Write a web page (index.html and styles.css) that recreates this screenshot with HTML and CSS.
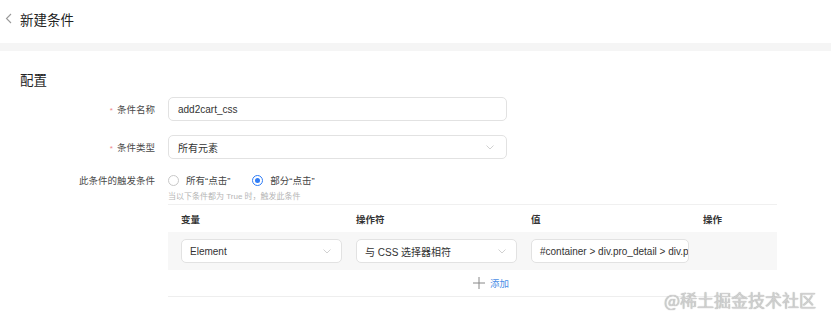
FILE: index.html
```html
<!DOCTYPE html>
<html lang="zh-CN">
  <head>
    <meta charset="UTF-8" />
    <title>新建条件</title>
    <link rel="stylesheet" href="styles.css">
  </head>
  <body>
    <div class="page-header">
      <span class="back">
        <svg width="7" height="11" viewBox="0 0 7 11"><path d="M6 1L1.5 5.5L6 10" fill="none" stroke="#999" stroke-width="1.1"/></svg>
      </span>
      <span class="page-title">新建条件</span>
    </div>
    <div class="band"></div>

    <div class="section">
      <div class="section-title">配置</div>

      <div class="form-row">
        <label class="form-label"><span class="req">*</span>条件名称</label>
        <div class="input-box">add2cart_css</div>
      </div>

      <div class="form-row">
        <label class="form-label"><span class="req">*</span>条件类型</label>
        <div class="input-box select">
          <span>所有元素</span>
          <svg class="arrow" width="8" height="5" viewBox="0 0 8 5"><path d="M0.5 0.5L4 4L7.5 0.5" fill="none" stroke="#ccc" stroke-width="0.9"/></svg>
        </div>
      </div>

      <div class="form-row radio-row">
        <label class="form-label">此条件的触发条件</label>
        <div class="radio-group">
          <span class="radio"><span class="dot"></span>所有“点击”</span>
          <span class="radio checked"><span class="dot"></span>部分“点击”</span>
        </div>
      </div>
      <div class="hint">当以下条件都为 True 时，触发此条件</div>

      <div class="cond-table">
        <div class="cond-head">
          <div class="cell">变量</div>
          <div class="cell">操作符</div>
          <div class="cell">值</div>
          <div class="cell">操作</div>
        </div>
        <div class="cond-row">
          <div class="cell">
            <div class="input-box select small">
              <span>Element</span>
              <svg class="arrow" width="8" height="5" viewBox="0 0 8 5"><path d="M0.5 0.5L4 4L7.5 0.5" fill="none" stroke="#ccc" stroke-width="0.9"/></svg>
            </div>
          </div>
          <div class="cell">
            <div class="input-box select small">
              <span>与 CSS 选择器相符</span>
              <svg class="arrow" width="8" height="5" viewBox="0 0 8 5"><path d="M0.5 0.5L4 4L7.5 0.5" fill="none" stroke="#ccc" stroke-width="0.9"/></svg>
            </div>
          </div>
          <div class="cell">
            <div class="input-box small value">#container &gt; div.pro_detail &gt; div.p</div>
          </div>
          <div class="cell"></div>
        </div>
        <div class="add-row">
          <svg width="12" height="12" viewBox="0 0 12 12"><path d="M6 0V12M0 6H12" stroke="#888" stroke-width="1"/></svg>
          <span class="add-text">添加</span>
        </div>
      </div>
    </div>

    <div class="watermark">@稀土掘金技术社区</div>
  </body>
</html>
```

FILE: styles.css
```css
* {
  margin: 0;
  padding: 0;
  box-sizing: border-box;
}

body {
  width: 831px;
  height: 320px;
  background: #fff;
  font-family: "Liberation Sans", "Noto Sans CJK SC", sans-serif;
  color: #333;
  position: relative;
  overflow: hidden;
}

.page-header {
  height: 43px;
  display: flex;
  align-items: center;
  padding-left: 5px;
  padding-bottom: 6px;
  gap: 8px;
}

.back {
  display: flex;
}

.page-title {
  font-size: 13.5px;
  color: #222;
}

.band {
  height: 8px;
  background: #f5f5f5;
}

.section {
  padding-top: 20px;
}

.section-title {
  font-size: 13.5px;
  line-height: 20px;
  color: #222;
  padding-left: 20px;
  margin-bottom: 6px;
}

.form-row {
  display: grid;
  grid-template-columns: 155px 339px;
  column-gap: 13px;
  align-items: center;
  margin-bottom: 14px;
}

.form-label {
  text-align: right;
  font-size: 9.5px;
  color: #4a4a4a;
}

.req {
  color: #e88;
  margin-right: 4px;
  font-size: 8px;
}

.input-box {
  height: 24px;
  border: 1px solid #e2e2e2;
  border-radius: 5px;
  background: #fff;
  display: flex;
  align-items: center;
  padding: 0 12px 0 9px;
  font-size: 10px;
  color: #333;
}

.select {
  justify-content: space-between;
}

.arrow {
  flex: none;
}

.radio-row {
  margin-bottom: 0;
  margin-top: 9px;
}

.radio-group {
  display: flex;
  gap: 22px;
  font-size: 9.5px;
  color: #444;
}

.radio {
  display: flex;
  align-items: center;
  gap: 7px;
}

.dot {
  width: 11px;
  height: 11px;
  border: 1px solid #c8c8c8;
  border-radius: 50%;
  display: flex;
  align-items: center;
  justify-content: center;
}

.checked .dot {
  border-color: #2f7cf6;
}

.checked .dot::after {
  content: "";
  width: 5px;
  height: 5px;
  border-radius: 50%;
  background: #2f7cf6;
}

.hint {
  margin-left: 168px;
  margin-top: 3px;
  font-size: 8px;
  color: #b5b5b5;
}

.cond-table {
  margin-left: 168px;
  margin-top: 3px;
  width: 609px;
  border-top: 1px solid #f0f0f0;
}

.cond-head,
.cond-row {
  display: grid;
  grid-template-columns: 175px 175px 173px 86px;
}

.cond-head {
  height: 27px;
  align-items: center;
  font-size: 9.5px;
  color: #333;
  font-weight: bold;
}

.cond-head .cell {
  padding-left: 13px;
}

.cond-head .cell:nth-child(4) {
  padding-left: 12px;
}

.cond-row {
  background: #f7f7f7;
  height: 38px;
  align-items: center;
}

.cond-row .cell {
  padding-left: 13px;
}

.small {
  width: 161px;
  font-size: 10px;
  padding: 0 10px 0 8px;
}

.value {
  width: 158px;
  padding: 0 7px 0 8px;
  white-space: nowrap;
  overflow: hidden;
}

.add-row {
  height: 27px;
  display: flex;
  align-items: center;
  gap: 5px;
  padding-left: 305px;
  border-bottom: 1px solid #eee;
}

.add-text {
  font-size: 9.5px;
  color: #4a8ee6;
}

.watermark {
  position: absolute;
  left: 664px;
  top: 287px;
  font-size: 17px;
  color: #d0d0d0;
  text-shadow: 0 0 1px #999;
  font-family: "Noto Sans CJK SC", sans-serif;
}
```
